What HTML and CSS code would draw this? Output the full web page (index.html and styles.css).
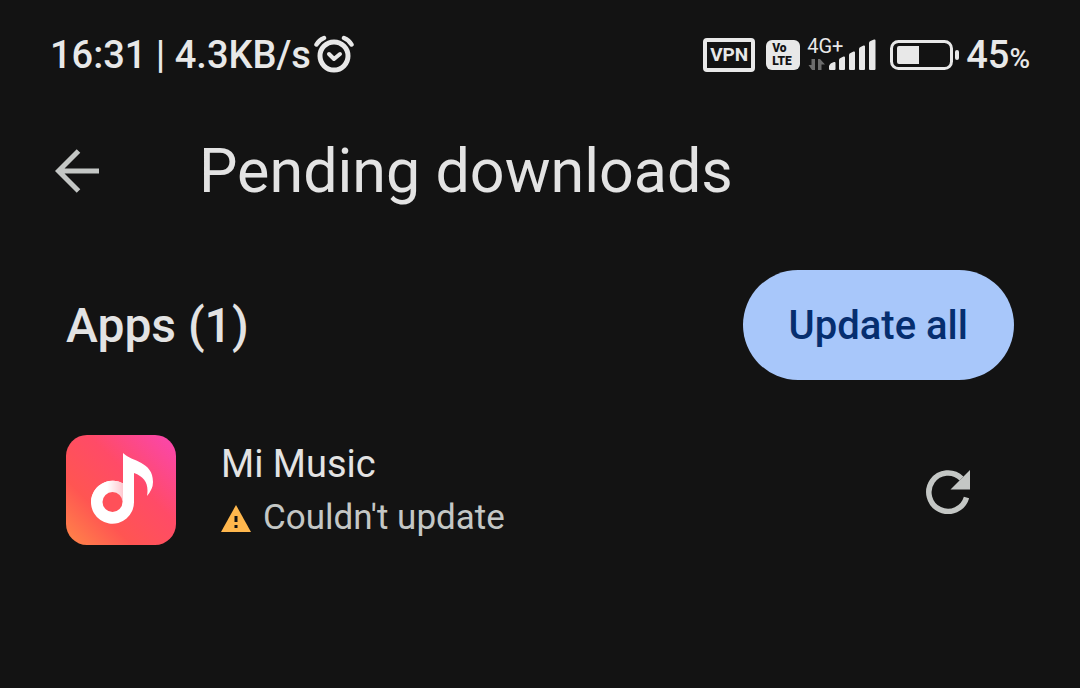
FILE: index.html
```
<!DOCTYPE html>
<html lang="en">
<head>
  <meta charset="UTF-8" />
  <meta name="viewport" content="width=device-width, initial-scale=1" />
  <title>Pending downloads</title>
  <link rel="stylesheet" href="styles.css">
</head>
<body>
  <div class="status-bar">
    <div class="status-left">
      <span>16:31 | 4.3KB/s</span>
      <svg class="alarm" viewBox="0 0 42 40" fill="none" stroke="currentColor" stroke-linecap="round">
        <circle cx="20" cy="21" r="14" stroke-width="5" />
        <path d="M2.500 9.500Q5 5 10 3M37.500 9.500Q35 5 30 3" stroke-width="4.500" />
        <path d="M15 19l5 5 6-5" stroke-width="4" stroke-linejoin="round" />
      </svg>
    </div>
    <div class="status-right">
      <span class="vpn">VPN</span>
      <span class="volte"><span>Vo</span><span>LTE</span></span>
      <span class="signal">
        <span class="network">4G+</span>
        <svg class="bars" viewBox="0 0 70 34" fill="currentColor">
          <path class="traffic" d="M8 21v11h-3L1.500 27H4.500V21zM11 32V21h2l5 5.500h-3.500V32z" />
          <path d="M22 31v-3q1-3 5-4q1.500-.5 1.500 1v6q0 1-1 1h-4.500q-1 0-1-1z" />
          <path d="M32 31V22q0-1.500 1.500-2l3-1.500q1.500-.5 1.500 1V31q0 1-1 1h-4q-1 0-1-1z" />
          <path d="M42 31V17q0-1.500 1.500-2l3-1.500q1.500-.5 1.500 1V31q0 1-1 1h-4q-1 0-1-1z" />
          <path d="M52 31V11q0-1.500 1.500-2l3-1.500q1.500-.5 1.500 1V31q0 1-1 1h-4q-1 0-1-1z" />
          <path d="M62 31V5q0-1.500 1.500-2l3.500-1.500q1.500-.5 1.500 1V31q0 1-1 1h-4.500q-1 0-1-1z" />
        </svg>
      </span>
      <svg class="battery" viewBox="0 0 70 30" fill="currentColor">
        <rect x="1.500" y="1.500" width="60" height="27" rx="7" fill="none" stroke="currentColor" stroke-width="3" />
        <path d="M29 6v18H9q-2 0-2-2V8q0-2 2-2z" />
        <rect x="65" y="10" width="4" height="10" rx="2" />
      </svg>
      <span class="percent">45<small>%</small></span>
    </div>
  </div>

  <header class="top-bar">
    <button class="icon-btn" aria-label="Back">
      <svg viewBox="0 0 44 44" fill="none" stroke="currentColor" stroke-width="5">
        <path d="M44 22H4M23.500 2L3.500 22l20 20" />
      </svg>
    </button>
    <h1>Pending downloads</h1>
  </header>

  <main>
    <div class="section-head">
      <h2>Apps (1)</h2>
      <button class="update-all">Update all</button>
    </div>
    <div class="app">
      <svg class="app-icon" viewBox="0 0 110 110">
        <defs>
          <linearGradient id="tile" x1="0" y1="1" x2="1" y2="0">
            <stop offset="0" stop-color="#ff8848" />
            <stop offset=".3" stop-color="#ff5552" />
            <stop offset=".6" stop-color="#ff4b67" />
            <stop offset="1" stop-color="#fa46b2" />
          </linearGradient>
          <linearGradient id="fold" x1="0" y1="0" x2="1" y2="0">
            <stop offset=".5" stop-color="#fff" />
            <stop offset="1" stop-color="#ffc9d0" />
          </linearGradient>
        </defs>
        <rect width="110" height="110" rx="21" fill="url(#tile)" />
        <path d="M57 18C66 27 87 26 87 47Q87 54 81 61C83 49 79 42 68 38V67A21.500 21.500 0 1 1 57 48.500z" fill="#fff" />
        <path d="M25 67A21.500 21.500 0 0 1 57 48.500V67z" fill="url(#fold)" />
        <circle cx="46.500" cy="67" r="10" fill="#ff5059" />
      </svg>
      <div class="app-text">
        <div class="app-name">Mi Music</div>
        <div class="app-status">
          <svg class="warning" viewBox="0 0 30 27">
            <path d="M15 0l15 27H0z" fill="#ffb74d" />
            <path d="M13.500 11h3v6h-3zM13.500 20h3v3h-3z" fill="#131313" />
          </svg>
          <span>Couldn't update</span>
        </div>
      </div>
      <button class="icon-btn retry" aria-label="Retry">
        <svg viewBox="0 0 44 44">
          <path d="M40.500 27.500A19.200 19.200 0 1 1 35.500 8.500" fill="none" stroke="currentColor" stroke-width="5.500" />
          <path d="M44 0v19.500H24.500z" fill="currentColor" />
        </svg>
      </button>
    </div>
  </main>
</body>
</html>
```
FILE: styles.css
```
* { box-sizing: border-box; }
body {
  margin: 0;
  background: #131313;
  color: #e3e3e3;
  font-family: Roboto, "Noto Sans", sans-serif;
}
svg { display: block; flex: none; }
h1, h2 { margin: 0; }
button {
  border: none;
  font-family: inherit;
  cursor: pointer;
}

.status-bar {
  display: flex;
  justify-content: space-between;
  align-items: center;
  height: 110px;
  padding: 0 50px;
  color: #e8e8e8;
  font-size: 38px;
  font-weight: 500;
  white-space: nowrap;
}
.status-left, .status-right {
  display: flex;
  align-items: center;
}
.status-left { gap: 3px; }
.alarm { width: 42px; height: 40px; }
.vpn {
  width: 52px;
  height: 34px;
  border: 4px solid;
  border-radius: 4px;
  font-size: 19px;
  font-weight: 700;
  line-height: 26px;
  text-align: center;
}
.volte {
  display: flex;
  flex-direction: column;
  width: 34px;
  height: 30px;
  margin: 0 7px 0 11px;
  padding: 2px 0 0 6px;
  border-radius: 6px;
  background: #e8e8e8;
  color: #131313;
  font-size: 12px;
  font-weight: 900;
  line-height: 13px;
}
.signal { position: relative; }
.bars { width: 70px; height: 34px; }
.network {
  position: absolute;
  top: -4px;
  left: 0;
  font-size: 20px;
  font-weight: 400;
  line-height: 24px;
}
.traffic { fill: #6c6c6c; }
.battery {
  width: 70px;
  height: 30px;
  margin: 0 6px 0 13px;
}
.percent small { font-size: 28px; }

.top-bar {
  display: flex;
  align-items: center;
  gap: 100px;
  height: 122px;
  padding: 0 55px;
}
.icon-btn {
  flex: none;
  width: 44px;
  height: 44px;
  padding: 0;
  background: none;
  color: #c4c7c5;
}
h1 {
  font-size: 61px;
  font-weight: 400;
}

main { padding: 38px 66px; }
.section-head {
  display: flex;
  justify-content: space-between;
  align-items: center;
}
h2 {
  font-size: 48px;
  font-weight: 500;
}
.update-all {
  height: 110px;
  padding: 0 46px;
  border-radius: 55px;
  background: #a8c7fa;
  color: #062e6f;
  font-size: 40px;
  font-weight: 500;
}

.app {
  display: flex;
  align-items: center;
  gap: 45px;
  margin-top: 55px;
  padding-right: 44px;
}
.app-icon { width: 110px; height: 110px; }
.app-text {
  flex: 1;
  padding-top: 2px;
}
.app-name {
  font-size: 38px;
  line-height: 54px;
}
.app-status {
  display: flex;
  align-items: center;
  gap: 12px;
  color: #c4c7c5;
  font-size: 35px;
  line-height: 54px;
}
.warning { width: 30px; height: 27px; }
.retry { margin-top: 4px; }
```
